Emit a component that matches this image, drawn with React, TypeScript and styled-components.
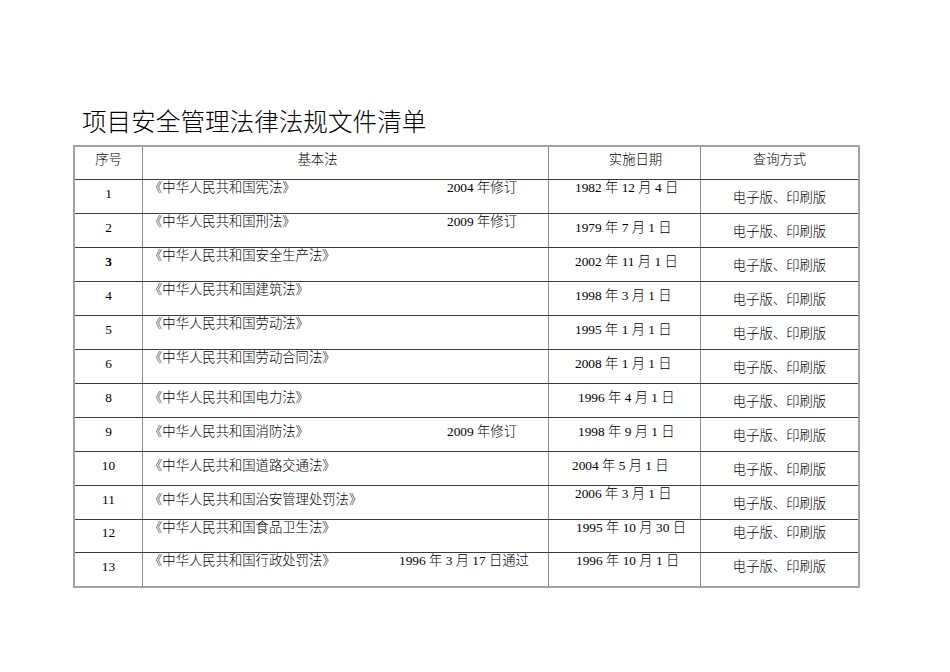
import React from 'react';
import styled, { createGlobalStyle } from 'styled-components';

const Global = createGlobalStyle`
  html, body { margin: 0; padding: 0; background: #fff; }
  body { font-family: "Liberation Serif", "Noto Sans CJK SC", serif; color: #000; }
`;

type VAlign = 'top' | 'mid' | 'low';

const Page = styled.div`
  width: 950px;
  height: 672px;
  box-sizing: border-box;
  padding: 105px 0 0 73px;
`;

const Title = styled.h1`
  margin: 0 0 10px 9px;
  font-family: "Noto Sans CJK SC", sans-serif;
  font-weight: 300;
  font-size: 24.6px;
  line-height: 30px;
  color: #000;
`;

const Table = styled.div`
  width: 787px;
  box-sizing: border-box;
  border: 2px solid #a2a2a2;
  font-size: 13.33px;
  line-height: 16px;
  font-weight: 300;
`;

const Row = styled.div<{ $h: number; $first?: boolean }>`
  display: grid;
  grid-template-columns: 67px 406px 152px 158px;
  height: ${(p) => p.$h}px;
  box-sizing: content-box;
  border-top: ${(p) => (p.$first ? 'none' : '1px solid #3c3c3c')};
`;

const Cell = styled.div<{ $v: VAlign; $first?: boolean }>`
  display: flex;
  box-sizing: border-box;
  min-width: 0;
  border-left: ${(p) => (p.$first ? 'none' : '1px solid #8a8a8a')};
  align-items: ${(p) => (p.$v === 'top' ? 'flex-start' : 'center')};
  padding-top: ${(p) => (p.$v === 'low' ? 2 : 0)}px;
  padding-bottom: ${(p) => (p.$v === 'mid' ? 6 : 0)}px;
`;

const NumCell = styled(Cell)<{ $bold?: boolean }>`
  justify-content: center;
  font-weight: ${(p) => (p.$bold ? 700 : 300)};
`;

const HeadCell = styled(Cell)<{ $shift?: number }>`
  justify-content: center;
  padding-left: ${(p) => Math.max(0, p.$shift || 0)}px;
  padding-right: ${(p) => Math.max(0, -(p.$shift || 0))}px;
`;

const LawCell = styled(Cell)<{ $noteAt: number }>`
  display: grid;
  grid-template-columns: ${(p) => p.$noteAt}px 1fr;
  padding-left: 6px;
  align-content: ${(p) => (p.$v === 'top' ? 'start' : 'center')};
  align-items: start;
`;

const DateCell = styled(Cell)<{ $shift?: number }>`
  padding-left: ${(p) => 26 + (p.$shift || 0)}px;
`;

const MediaCell = styled(Cell)`
  justify-content: center;
`;

const Text = styled.span`
  white-space: nowrap;
`;

interface Law {
  n: string;
  bold?: boolean;
  name: string;
  note?: string;
  noteAt?: number;
  date: string;
  shift?: number;
  nameV: VAlign;
  dateV: VAlign;
  mediaV: VAlign;
  h: number;
}

const laws: Law[] = [
  { n: '1', name: '《中华人民共和国宪法》', note: '2004 年修订', date: '1982 年 12 月 4 日', nameV: 'top', dateV: 'top', mediaV: 'low', h: 33 },
  { n: '2', name: '《中华人民共和国刑法》', note: '2009 年修订', date: '1979 年 7 月 1 日', nameV: 'top', dateV: 'mid', mediaV: 'low', h: 33 },
  { n: '3', bold: true, name: '《中华人民共和国安全生产法》', date: '2002 年 11 月 1 日', nameV: 'top', dateV: 'mid', mediaV: 'low', h: 33 },
  { n: '4', name: '《中华人民共和国建筑法》', date: '1998 年 3 月 1 日', nameV: 'top', dateV: 'mid', mediaV: 'low', h: 33 },
  { n: '5', name: '《中华人民共和国劳动法》', date: '1995 年 1 月 1 日', nameV: 'top', dateV: 'mid', mediaV: 'low', h: 33 },
  { n: '6', name: '《中华人民共和国劳动合同法》', date: '2008 年 1 月 1 日', nameV: 'top', dateV: 'mid', mediaV: 'low', h: 33 },
  { n: '8', name: '《中华人民共和国电力法》', date: '1996 年 4 月 1 日', shift: 3, nameV: 'mid', dateV: 'mid', mediaV: 'low', h: 33 },
  { n: '9', name: '《中华人民共和国消防法》', note: '2009 年修订', date: '1998 年 9 月 1 日', shift: 3, nameV: 'mid', dateV: 'mid', mediaV: 'low', h: 33 },
  { n: '10', name: '《中华人民共和国道路交通法》', date: '2004 年 5 月 1 日', shift: -3, nameV: 'mid', dateV: 'mid', mediaV: 'low', h: 33 },
  { n: '11', name: '《中华人民共和国治安管理处罚法》', date: '2006 年 3 月 1 日', nameV: 'mid', dateV: 'top', mediaV: 'low', h: 33 },
  { n: '12', name: '《中华人民共和国食品卫生法》', date: '1995 年 10 月 30 日', shift: 1, nameV: 'top', dateV: 'top', mediaV: 'mid', h: 32 },
  { n: '13', name: '《中华人民共和国行政处罚法》', note: '1996 年 3 月 17 日通过', noteAt: 250, date: '1996 年 10 月 1 日', shift: 1, nameV: 'top', dateV: 'top', mediaV: 'mid', h: 33 },
];

export default function App() {
  return (
    <>
      <Global />
      <Page>
        <Title>项目安全管理法律法规文件清单</Title>
        <Table>
          <Row $h={32} $first>
            <HeadCell $v="mid" $first>
              <Text>序号</Text>
            </HeadCell>
            <HeadCell $v="mid" $shift={-56}>
              <Text>基本法</Text>
            </HeadCell>
            <HeadCell $v="mid" $shift={22}>
              <Text>实施日期</Text>
            </HeadCell>
            <HeadCell $v="mid">
              <Text>查询方式</Text>
            </HeadCell>
          </Row>
          {laws.map((l) => (
            <Row key={l.n} $h={l.h}>
              <NumCell $v="mid" $first $bold={l.bold}>
                <Text>{l.n}</Text>
              </NumCell>
              <LawCell $v={l.nameV} $noteAt={l.noteAt ?? 298}>
                <Text>{l.name}</Text>
                {l.note ? <Text>{l.note}</Text> : null}
              </LawCell>
              <DateCell $v={l.dateV} $shift={l.shift}>
                <Text>{l.date}</Text>
              </DateCell>
              <MediaCell $v={l.mediaV}>
                <Text>电子版、印刷版</Text>
              </MediaCell>
            </Row>
          ))}
        </Table>
      </Page>
    </>
  );
}
